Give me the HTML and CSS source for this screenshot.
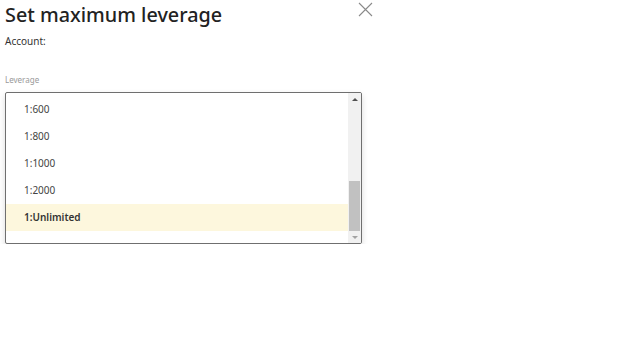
FILE: index.html
```html
<!DOCTYPE html>
<html lang="en">
<head>
    <meta charset="UTF-8">
    <meta name="viewport" content="width=device-width, initial-scale=1.0">
    <title>Set maximum leverage</title>
    <link rel="stylesheet" href="styles.css">
</head>
<body>

    <div class="dialog">
        <!-- Header -->
        <div class="dialog-header">
            <h1 class="dialog-title">Set maximum leverage</h1>
            <button class="close-btn" aria-label="Close">
                <svg width="15" height="15" viewBox="0 0 15 15">
                    <path d="M1 1 L14 14 M14 1 L1 14" stroke="#8a8a8a" stroke-width="1.1" fill="none"/>
                </svg>
            </button>
        </div>

        <div class="account">Account:</div>

        <!-- Leverage list (scrolled to the end) -->
        <div class="field-label">Leverage</div>
        <div class="listbox">
            <div class="options">
                <div class="option">1:1</div>
                <div class="option">1:10</div>
                <div class="option">1:25</div>
                <div class="option">1:50</div>
                <div class="option">1:100</div>
                <div class="option">1:200</div>
                <div class="option">1:300</div>
                <div class="option">1:400</div>
                <div class="option">1:500</div>
                <div class="option">1:600</div>
                <div class="option">1:800</div>
                <div class="option">1:1000</div>
                <div class="option">1:2000</div>
                <div class="option selected">1:Unlimited</div>
                <div class="options-end"></div>
            </div>
            <div class="scrollbar">
                <div class="arrow up"></div>
                <div class="track">
                    <div class="thumb"></div>
                </div>
                <div class="arrow down"></div>
            </div>
        </div>
    </div>

</body>
</html>
```

FILE: styles.css
```css
body {
    margin: 0;
    padding: 0;
    font-family: "Noto Sans", "Open Sans", sans-serif;
    color: #333;
    background: #fff;
}

.dialog {
    width: 357px;
    padding: 0 0 0 5px;
}

/* Header */
.dialog-header {
    display: flex;
    justify-content: space-between;
    align-items: flex-start;
    width: 368px;
}
.dialog-title {
    margin: 0;
    padding-top: 1px;
    font-size: 19.8px;
    font-weight: 500;
    line-height: 28px;
    color: #222;
}
.close-btn {
    border: none;
    background: transparent;
    padding: 0;
    margin-top: 2px;
    width: 15px;
    height: 15px;
    cursor: pointer;
}
.close-btn svg { display: block; }

.account {
    margin-top: 5px;
    font-size: 10px;
    line-height: 14px;
    color: #333;
}

.field-label {
    margin-top: 26px;
    font-size: 8px;
    line-height: 12px;
    color: #999;
}

/* List box */
.listbox {
    margin-top: 6px;
    height: 150px;
    border: 1px solid #6f6f6f;
    border-radius: 2px;
    box-shadow: 0 3px 6px rgba(0, 0, 0, 0.15);
    display: flex;
    overflow: hidden;
    background: #fff;
}
.options {
    flex: 1;
    display: flex;
    flex-direction: column;
    justify-content: flex-end;
    overflow: hidden;
}
.option {
    flex: none;
    height: 27px;
    line-height: 27px;
    padding-left: 18px;
    font-size: 10px;
    color: #444;
}
.option.selected {
    background: #fdf7dd;
    font-weight: 600;
    color: #333;
}
.options-end {
    flex: none;
    height: 12px;
}

/* Scrollbar */
.scrollbar {
    width: 13px;
    display: flex;
    flex-direction: column;
    background: #f1f1f1;
}
.arrow {
    height: 12px;
    display: flex;
    justify-content: center;
    align-items: center;
}
.arrow::before {
    content: "";
    border-left: 3px solid transparent;
    border-right: 3px solid transparent;
}
.arrow.up::before { border-bottom: 3px solid #505050; }
.arrow.down::before { border-top: 3px solid #a3a3a3; }
.track {
    flex: 1;
    display: flex;
    flex-direction: column;
    justify-content: flex-end;
    padding: 0 1px;
}
.thumb {
    height: 50px;
    background: #c1c1c1;
}
```
